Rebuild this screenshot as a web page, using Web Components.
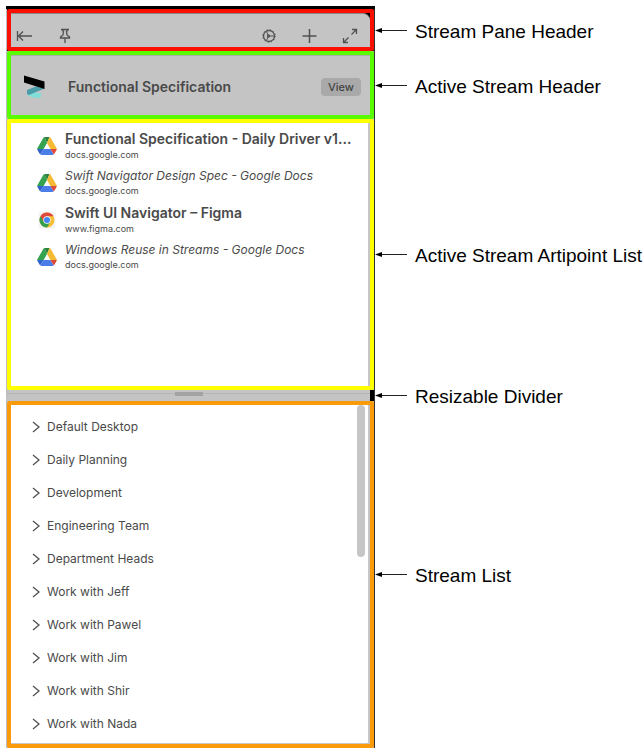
<!DOCTYPE html>
<html lang="en">
<head>
<meta charset="utf-8">
<meta name="viewport" content="width=device-width, initial-scale=1">
<title>Stream Pane</title>
<style>
  body {
    margin: 0;
    padding: 6px 0 6px 6px;
    background: #fff;
    font-family: Inter, "Liberation Sans", sans-serif;
    color: #4a4a4a;
  }
</style>
</head>
<body>
<stream-pane></stream-pane>

<script>
const driveIcon = `
  <svg width="20" height="20" viewBox="0 0 20 20" aria-hidden="true">
    <path d="M7.5 1Q6.800 1 6.400 1.700L.5 12Q.2 12.500.2 13H6.600L10 7z" fill="#34a24f"/>
    <path d="M7.500 1h5L10 7z" fill="#2a8040"/>
    <path d="M12.500 1Q13.200 1 13.600 1.700L19.500 12Q19.800 12.500 19.800 13H13.400L10 7z" fill="#f5bb35"/>
    <path d="M3.300 18.300 6.600 13h6.800l3.300 5.300Q16.200 19 15.400 19H4.600Q3.800 19 3.300 18.300z" fill="#4a7de8"/>
    <path d="M.2 13h6.400l-3.300 5.300Q2.800 18 2.500 17.500L.5 14z" fill="#2f62cc"/>
    <path d="M19.800 13h-6.400l3.300 5.300Q17.200 18 17.500 17.500L19.500 14z" fill="#e0493a"/>
  </svg>`;

const chromeIcon = `
  <svg width="20" height="20" viewBox="0 0 20 20" aria-hidden="true">
    <rect x="1.5" y="1.5" width="17" height="17" rx="3" fill="#f3f3f3"/>
    <circle cx="10" cy="10" r="7.5" fill="#f5bf35"/>
    <path d="M10 10 3.500 6.250A7.500 7.500 0 0 0 10 17.500l3.250-5.600z" fill="#34a04f"/>
    <path d="M3.500 6.250a7.500 7.500 0 0 1 13 0H10l-3.250 5.600z" fill="#dd4b3e"/>
    <circle cx="10" cy="10" r="3.700" fill="#fff"/>
    <circle cx="10" cy="10" r="3" fill="#4285f4"/>
  </svg>`;

// outlined box with a callout arrow and label to its right
class PaneRegion extends HTMLElement {
  constructor() {
    super();
    this.attachShadow({ mode: "open" });
  }

  connectedCallback() {
    this.shadowRoot.innerHTML = `
      <style>
        :host {
          display: flex;
          align-items: center;
        }

        .box {
          flex: 1;
          min-width: 0;
          border-left: 1px solid #bdbdbd;
          border-right: 1px solid #333;
          background: var(--backdrop, #c4c4c4);
        }

        .outline {
          border: 4px solid var(--outline);
          border-radius: 2px;
        }

        :host([plain]) .outline {
          border: 0;
          border-right: 4px solid #000;
          border-radius: 0;
        }

        .callout {
          flex: 0 0 268px;
          display: flex;
          align-items: center;
          gap: 8px;
          height: 0;
          color: #000;
          font: 19px/22px "Liberation Sans", Arial, sans-serif;
          white-space: nowrap;
        }

        .callout svg {
          flex: none;
        }

        .callout span {
          padding-top: 3px;
        }
      </style>
      <div class="box"><div class="outline"><slot></slot></div></div>
      <div class="callout">
        <svg width="32" height="7" viewBox="0 0 32 7" aria-hidden="true">
          <path d="M5 3.500h27" stroke="#222"/>
          <path d="M0 3.500 7 1v5z" fill="#000"/>
        </svg>
        <span>${this.getAttribute("label")}</span>
      </div>
    `;
  }
}

class PaneHeader extends HTMLElement {
  constructor() {
    super();
    this.attachShadow({ mode: "open" });
    this.shadowRoot.innerHTML = `
      <style>
        :host {
          display: block;
          background: #000;
        }

        header {
          display: flex;
          align-items: center;
          gap: 24px;
          box-sizing: border-box;
          height: 34px;
          padding: 11px 12px 0 5px;
          border-top: 1px solid #8a8a8a;
          border-radius: 0 7px 0 0;
          background: #c4c4c4;
        }

        button {
          display: flex;
          padding: 0;
          border: 0;
          background: none;
        }

        .space {
          flex: 1;
        }

        svg {
          fill: none;
          stroke: #505050;
          stroke-width: 1.3;
        }
      </style>
      <header>
        <button aria-label="Collapse pane">
          <svg width="17" height="16" viewBox="0 0 17 16"><path d="M1.500 3v10M16 8H2.500M7 3.500 2.500 8 7 12.500"/></svg>
        </button>
        <button aria-label="Pin pane">
          <svg width="16" height="16" viewBox="0 0 16 16"><path d="M4 1.500h8M5.500 1.500v1l1 1-.5 3.500-2.500 2v1h9V9L10 7l-.5-3.500 1-1v-1M8 10v5"/></svg>
        </button>
        <span class="space"></span>
        <button aria-label="Settings">
          <svg width="16" height="16" viewBox="0 0 16 16"><circle cx="7" cy="8" r="5.500"/><circle cx="7" cy="8" r="6.300" stroke-width="1" stroke-dasharray="1.200 2.100"/><circle cx="6.500" cy="8" r="1"/><path d="M7.500 8h5M6 7 4.500 3.500M6 9l-1.500 3.500" stroke-width="1"/></svg>
        </button>
        <button aria-label="Add stream">
          <svg width="16" height="16" viewBox="0 0 16 16"><path d="M7.500 1v14M.5 8h14" stroke-width="1.500"/></svg>
        </button>
        <button aria-label="Expand pane">
          <svg width="16" height="16" viewBox="0 0 16 16"><path d="M9.500 6.500 14.500 1.500M10 1.500h4.500V6M6.500 9.500l-5 5M1.500 10v4.500H6"/></svg>
        </button>
      </header>
    `;
  }
}

class ActiveStreamHeader extends HTMLElement {
  constructor() {
    super();
    this.attachShadow({ mode: "open" });
    this.shadowRoot.innerHTML = `
      <style>
        :host {
          display: flex;
          align-items: center;
          gap: 22px;
          box-sizing: border-box;
          height: 60px;
          padding: 3px 9px 0 12px;
          border-top: 1px solid #adadad;
          background: #c4c4c4;
        }

        h2 {
          flex: 1;
          margin: 0;
          font-size: 14px;
          line-height: 18px;
          font-weight: 600;
          white-space: nowrap;
        }

        button {
          height: 18px;
          padding: 0 7px;
          border: 0;
          border-radius: 4px;
          background: #a9a9a9;
          color: #444;
          font: 500 11px/18px Inter, sans-serif;
        }
      </style>
      <svg width="23" height="24" viewBox="0 0 23 24" aria-hidden="true">
        <path d="M5 19.500 11.500 17.500l7 1-1.500 4.500-7-.5-5-2z" fill="#7fe0d8"/>
        <path d="M4 15 13 11.500l8.500 2L6 20l-2-1z" fill="#4a9ba8"/>
        <path d="M1 .5 21.500 6.500v7.500L1 7.500z" fill="#000"/>
      </svg>
      <h2><slot></slot></h2>
      <button>View</button>
    `;
  }
}

class ArtipointItem extends HTMLElement {
  constructor() {
    super();
    this.attachShadow({ mode: "open" });
  }

  connectedCallback() {
    const site = this.getAttribute("site");
    this.shadowRoot.innerHTML = `
      <style>
        :host {
          display: block;
        }

        a {
          display: flex;
          align-items: center;
          gap: 8px;
          color: inherit;
          text-decoration: none;
        }

        svg {
          flex: none;
        }

        .text {
          min-width: 0;
        }

        .title {
          overflow: hidden;
          font-size: 12px;
          line-height: 16px;
          font-style: italic;
          white-space: nowrap;
        }

        :host([open]) .title {
          font-size: 14px;
          line-height: 18px;
          font-style: normal;
          font-weight: 600;
        }

        .site {
          font-size: 9px;
          line-height: 13px;
        }
      </style>
      <a href="#">
        ${site == "www.figma.com" ? chromeIcon : driveIcon}
        <div class="text">
          <div class="title"><slot></slot></div>
          <div class="site">${site}</div>
        </div>
      </a>
    `;
  }
}

class ArtipointList extends HTMLElement {
  constructor() {
    super();
    this.attachShadow({ mode: "open" });
    this.shadowRoot.innerHTML = `
      <style>
        :host {
          display: flex;
          flex-direction: column;
          gap: 7px;
          box-sizing: border-box;
          min-height: 263px;
          padding: 7px 0 7px 26px;
          border-right: 2px solid #c6c6c6;
          background: #fff;
        }
      </style>
      <slot></slot>
    `;
  }
}

class PaneDivider extends HTMLElement {
  constructor() {
    super();
    this.attachShadow({ mode: "open" });
    this.shadowRoot.innerHTML = `
      <style>
        :host {
          display: flex;
          align-items: center;
          height: 7px;
          padding-bottom: 4px;
          background: #c4c4c4;
        }

        .line {
          flex: 1;
          height: 1px;
          background: #b4b4b4;
        }

        .grip {
          width: 28px;
          height: 4px;
          background: #a3a3a3;
        }
      </style>
      <div class="line"></div>
      <div class="grip"></div>
      <div class="line"></div>
    `;
  }

  connectedCallback() {
    this.setAttribute("role", "separator");
  }
}

class StreamList extends HTMLElement {
  constructor() {
    super();
    this.attachShadow({ mode: "open" });

    this.streams = [
      "Default Desktop",
      "Daily Planning",
      "Development",
      "Engineering Team",
      "Department Heads",
      "Work with Jeff",
      "Work with Pawel",
      "Work with Jim",
      "Work with Shir",
      "Work with Nada",
    ];
  }

  streamTemplate(name) {
    return `
      <li>
        <button>
          <svg width="8" height="12" viewBox="0 0 8 12" aria-hidden="true"><path d="M1 1l6 5-6 5"/></svg>
          ${name}
        </button>
      </li>
    `;
  }

  connectedCallback() {
    this.shadowRoot.innerHTML = `
      <style>
        :host {
          display: flex;
          border-right: 2px solid #c6c6c6;
          border-bottom: 1px solid #c6c6c6;
          border-radius: 0 0 3px 0;
          background: #fff;
        }

        ul {
          flex: 1;
          margin: 0;
          padding: 5px 0 3px 21px;
          list-style: none;
        }

        button {
          display: flex;
          align-items: center;
          gap: 7px;
          height: 33px;
          padding: 0;
          border: 0;
          background: none;
          color: inherit;
          font: 12px/16px Inter, sans-serif;
        }

        svg {
          fill: none;
          stroke: #505050;
          stroke-width: 1.3;
        }

        /* scrollbar */
        .track {
          width: 8px;
          margin-right: 3px;
        }

        .thumb {
          height: 45%;
          border-radius: 4px;
          background: #c6c6c6;
        }
      </style>
      <ul>${this.streams.map((s) => this.streamTemplate(s)).join("")}</ul>
      <div class="track"><div class="thumb"></div></div>
    `;
  }
}

class StreamPane extends HTMLElement {
  constructor() {
    super();
    this.attachShadow({ mode: "open" });
    this.shadowRoot.innerHTML = `
      <style>
        :host {
          display: block;
        }

        /* window edge above the header */
        .edge {
          height: 3px;
          margin-right: 268px;
          background: #000;
        }

        .header { --outline: #fb0f00; --backdrop: #000; }
        .active { --outline: #58fb00; }
        .artipoints { --outline: #ffff00; }
        .streams { --outline: #fb9a0a; }
      </style>
      <div class="edge"></div>
      <pane-region class="header" label="Stream Pane Header">
        <pane-header></pane-header>
      </pane-region>
      <pane-region class="active" label="Active Stream Header">
        <active-stream-header>Functional Specification</active-stream-header>
      </pane-region>
      <pane-region class="artipoints" label="Active Stream Artipoint List">
        <artipoint-list>
          <artipoint-item open site="docs.google.com">Functional Specification - Daily Driver v1...</artipoint-item>
          <artipoint-item site="docs.google.com">Swift Navigator Design Spec - Google Docs</artipoint-item>
          <artipoint-item open site="www.figma.com">Swift UI Navigator – Figma</artipoint-item>
          <artipoint-item site="docs.google.com">Windows Reuse in Streams - Google Docs</artipoint-item>
        </artipoint-list>
      </pane-region>
      <pane-region plain label="Resizable Divider">
        <pane-divider></pane-divider>
      </pane-region>
      <pane-region class="streams" label="Stream List">
        <stream-list></stream-list>
      </pane-region>
    `;
  }
}

customElements.define("pane-region", PaneRegion);
customElements.define("pane-header", PaneHeader);
customElements.define("active-stream-header", ActiveStreamHeader);
customElements.define("artipoint-item", ArtipointItem);
customElements.define("artipoint-list", ArtipointList);
customElements.define("pane-divider", PaneDivider);
customElements.define("stream-list", StreamList);
customElements.define("stream-pane", StreamPane);
</script>
</body>
</html>
